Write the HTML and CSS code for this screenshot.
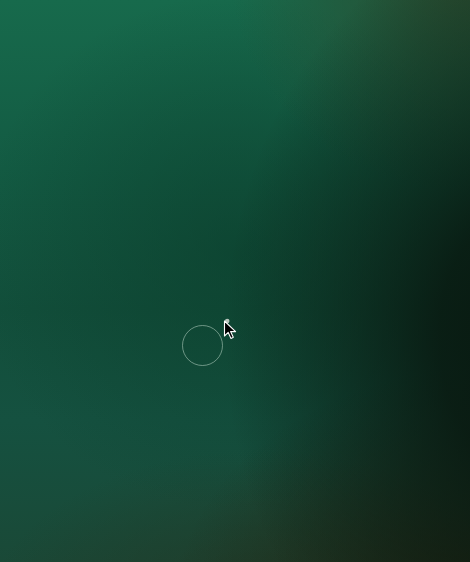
FILE: index.html
```html
<!DOCTYPE html>
<html lang="en">
<head>
    <meta charset="UTF-8">
    <meta name="viewport" content="width=device-width, initial-scale=1.0">
    <title>Loading</title>
    <link rel="stylesheet" href="styles.css">
</head>
<body>
    <div class="scene">
        <div class="spinner"></div>
        <svg class="cursor" width="15" height="23" viewBox="0 0 15 23">
            <circle cx="4.2" cy="3" r="2.3" fill="#b8c4bc"/>
            <path d="M1.5 3 L1.5 18 L5.2 14.4 L8 20.4 L10.3 19.3 L7.6 13.6 L12.6 13.6 Z" fill="#000" stroke="#fff" stroke-width="1.1" stroke-linejoin="round"/>
        </svg>
    </div>
</body>
</html>
```

FILE: styles.css
```css
html, body {
    margin: 0;
    height: 100%;
}
body {
    font-family: "Liberation Sans", Arial, sans-serif;
    background-color: #124d39;
}
.scene {
    position: relative;
    height: 100%;
    overflow: hidden;
    background:
        radial-gradient(ellipse 330px 420px at 118% 60%, rgba(8, 22, 14, 1) 0%, rgba(8, 22, 14, 0.85) 35%, rgba(8, 22, 14, 0) 100%),
        radial-gradient(ellipse 320px 240px at 105% 108%, rgba(32, 34, 16, 1) 0%, rgba(32, 34, 16, 0) 100%),
        radial-gradient(ellipse 240px 220px at 100% -5%, rgba(46, 72, 44, 0.9) 0%, rgba(46, 72, 44, 0) 100%),
        radial-gradient(ellipse 280px 180px at 55% 112%, rgba(34, 54, 36, 0.85) 0%, rgba(34, 54, 36, 0) 100%),
        radial-gradient(ellipse 260px 260px at 50% 45%, rgba(10, 60, 42, 0.6) 0%, rgba(10, 60, 42, 0) 100%),
        linear-gradient(to bottom, #176a4c 0%, #135b43 30%, #124f3b 55%, #155140 75%, #1a4937 100%);
}
.spinner {
    position: absolute;
    left: 182px;
    top: 325px;
    width: 39px;
    height: 39px;
    border: 1.5px solid rgba(170, 200, 185, 0.6);
    border-radius: 50%;
}
.cursor {
    position: absolute;
    left: 223px;
    top: 318px;
}
```
